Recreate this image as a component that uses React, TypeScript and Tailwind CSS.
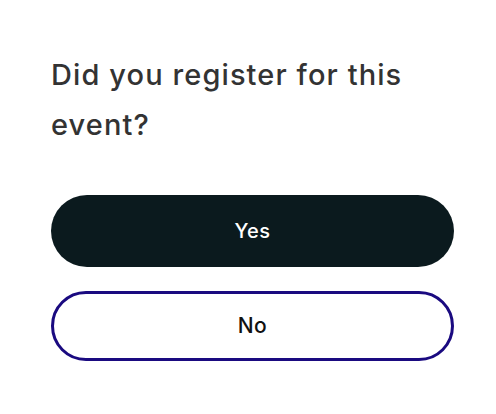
export default function App() {
  return (
    <div className="w-[496px] h-[414px] bg-white pl-[51px] pr-[42px] pt-[50px]" style={{ fontFamily: "Inter, 'Liberation Sans', sans-serif" }}>
      <h1 className="text-[29px] leading-[50px] font-medium text-[#333333] tracking-[1.1px]">Did you register for this event?</h1>
      <div className="mt-[45px] flex flex-col gap-[24px]">
        <button className="h-[72px] w-full rounded-full bg-[#0b1a1e] text-white text-[20px] font-medium tracking-[0.5px]">Yes</button>
        <button className="h-[70px] w-full rounded-full border-[3px] border-[#1a0a80] bg-white text-[#111111] text-[21px] font-medium tracking-[0.5px]">No</button>
      </div>
    </div>
  );
}
